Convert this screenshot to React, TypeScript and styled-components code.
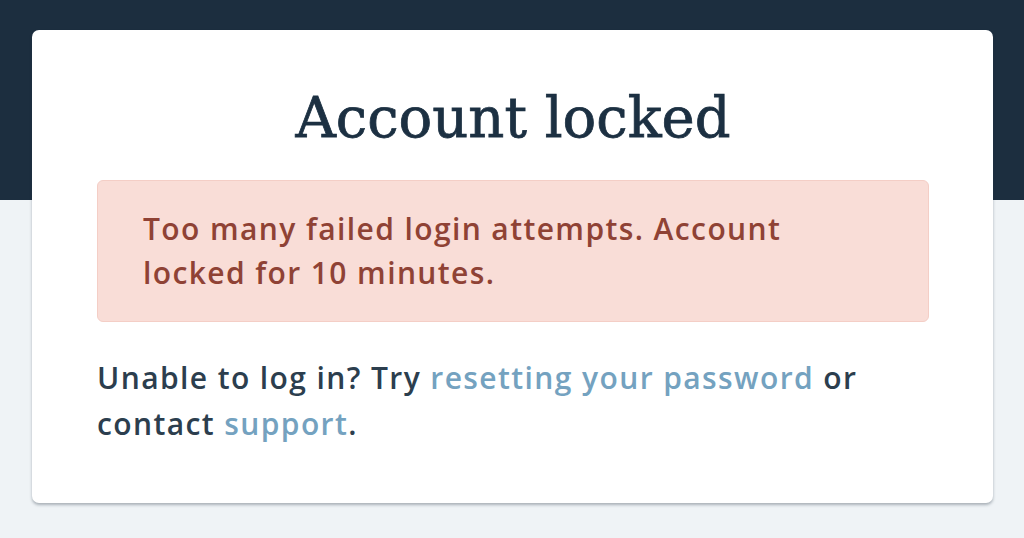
import React from "react";
import styled, { createGlobalStyle } from "styled-components";

const GlobalStyle = createGlobalStyle`
  html, body {
    margin: 0;
    padding: 0;
  }
  body {
    background: #eff3f6;
    font-family: "Open Sans", Lato, sans-serif;
  }
`;

const Page = styled.div`
  min-height: 538px;
  background: linear-gradient(#1c2e3f 0, #1c2e3f 200px, #eff3f6 200px);
  padding: 30px 31px 0 32px;
  box-sizing: border-box;
`;

const Card = styled.div`
  background: #ffffff;
  border-radius: 7px;
  box-shadow: 0 2px 3px rgba(40, 55, 70, 0.35);
  padding: 56px 64px 58px 65px;
  box-sizing: border-box;
  height: 473px;
`;

const Title = styled.h1`
  margin: 0 0 30px;
  text-align: center;
  font-family: "DejaVu Serif", "Liberation Serif", serif;
  font-weight: 400;
  font-size: 56px;
  line-height: 64px;
  color: #1c3042;
  -webkit-text-stroke: 0.8px #1c3042;
`;

const Alert = styled.div`
  background: #f9ddd7;
  border: 1px solid #f4cec6;
  border-radius: 6px;
  color: #8f4235;
  font-size: 30px;
  font-weight: 600;
  letter-spacing: 1.4px;
  line-height: 44px;
  padding: 26px 70px 26px 45px;
  margin-bottom: 33px;
`;

const Help = styled.p`
  margin: 0;
  color: #2c3e4e;
  font-size: 30px;
  font-weight: 600;
  letter-spacing: 1.4px;
  line-height: 46px;
`;

const Link = styled.a`
  color: #74a2c0;
  text-decoration: none;
`;

export default function App() {
  return (
    <>
      <GlobalStyle />
      <Page>
        <Card>
          <Title>Account locked</Title>
          <Alert>
            Too many failed login attempts. Account locked for 10 minutes.
          </Alert>
          <Help>
            Unable to log in? Try <Link href="#">resetting your password</Link> or
            contact <Link href="#">support</Link>.
          </Help>
        </Card>
      </Page>
    </>
  );
}
